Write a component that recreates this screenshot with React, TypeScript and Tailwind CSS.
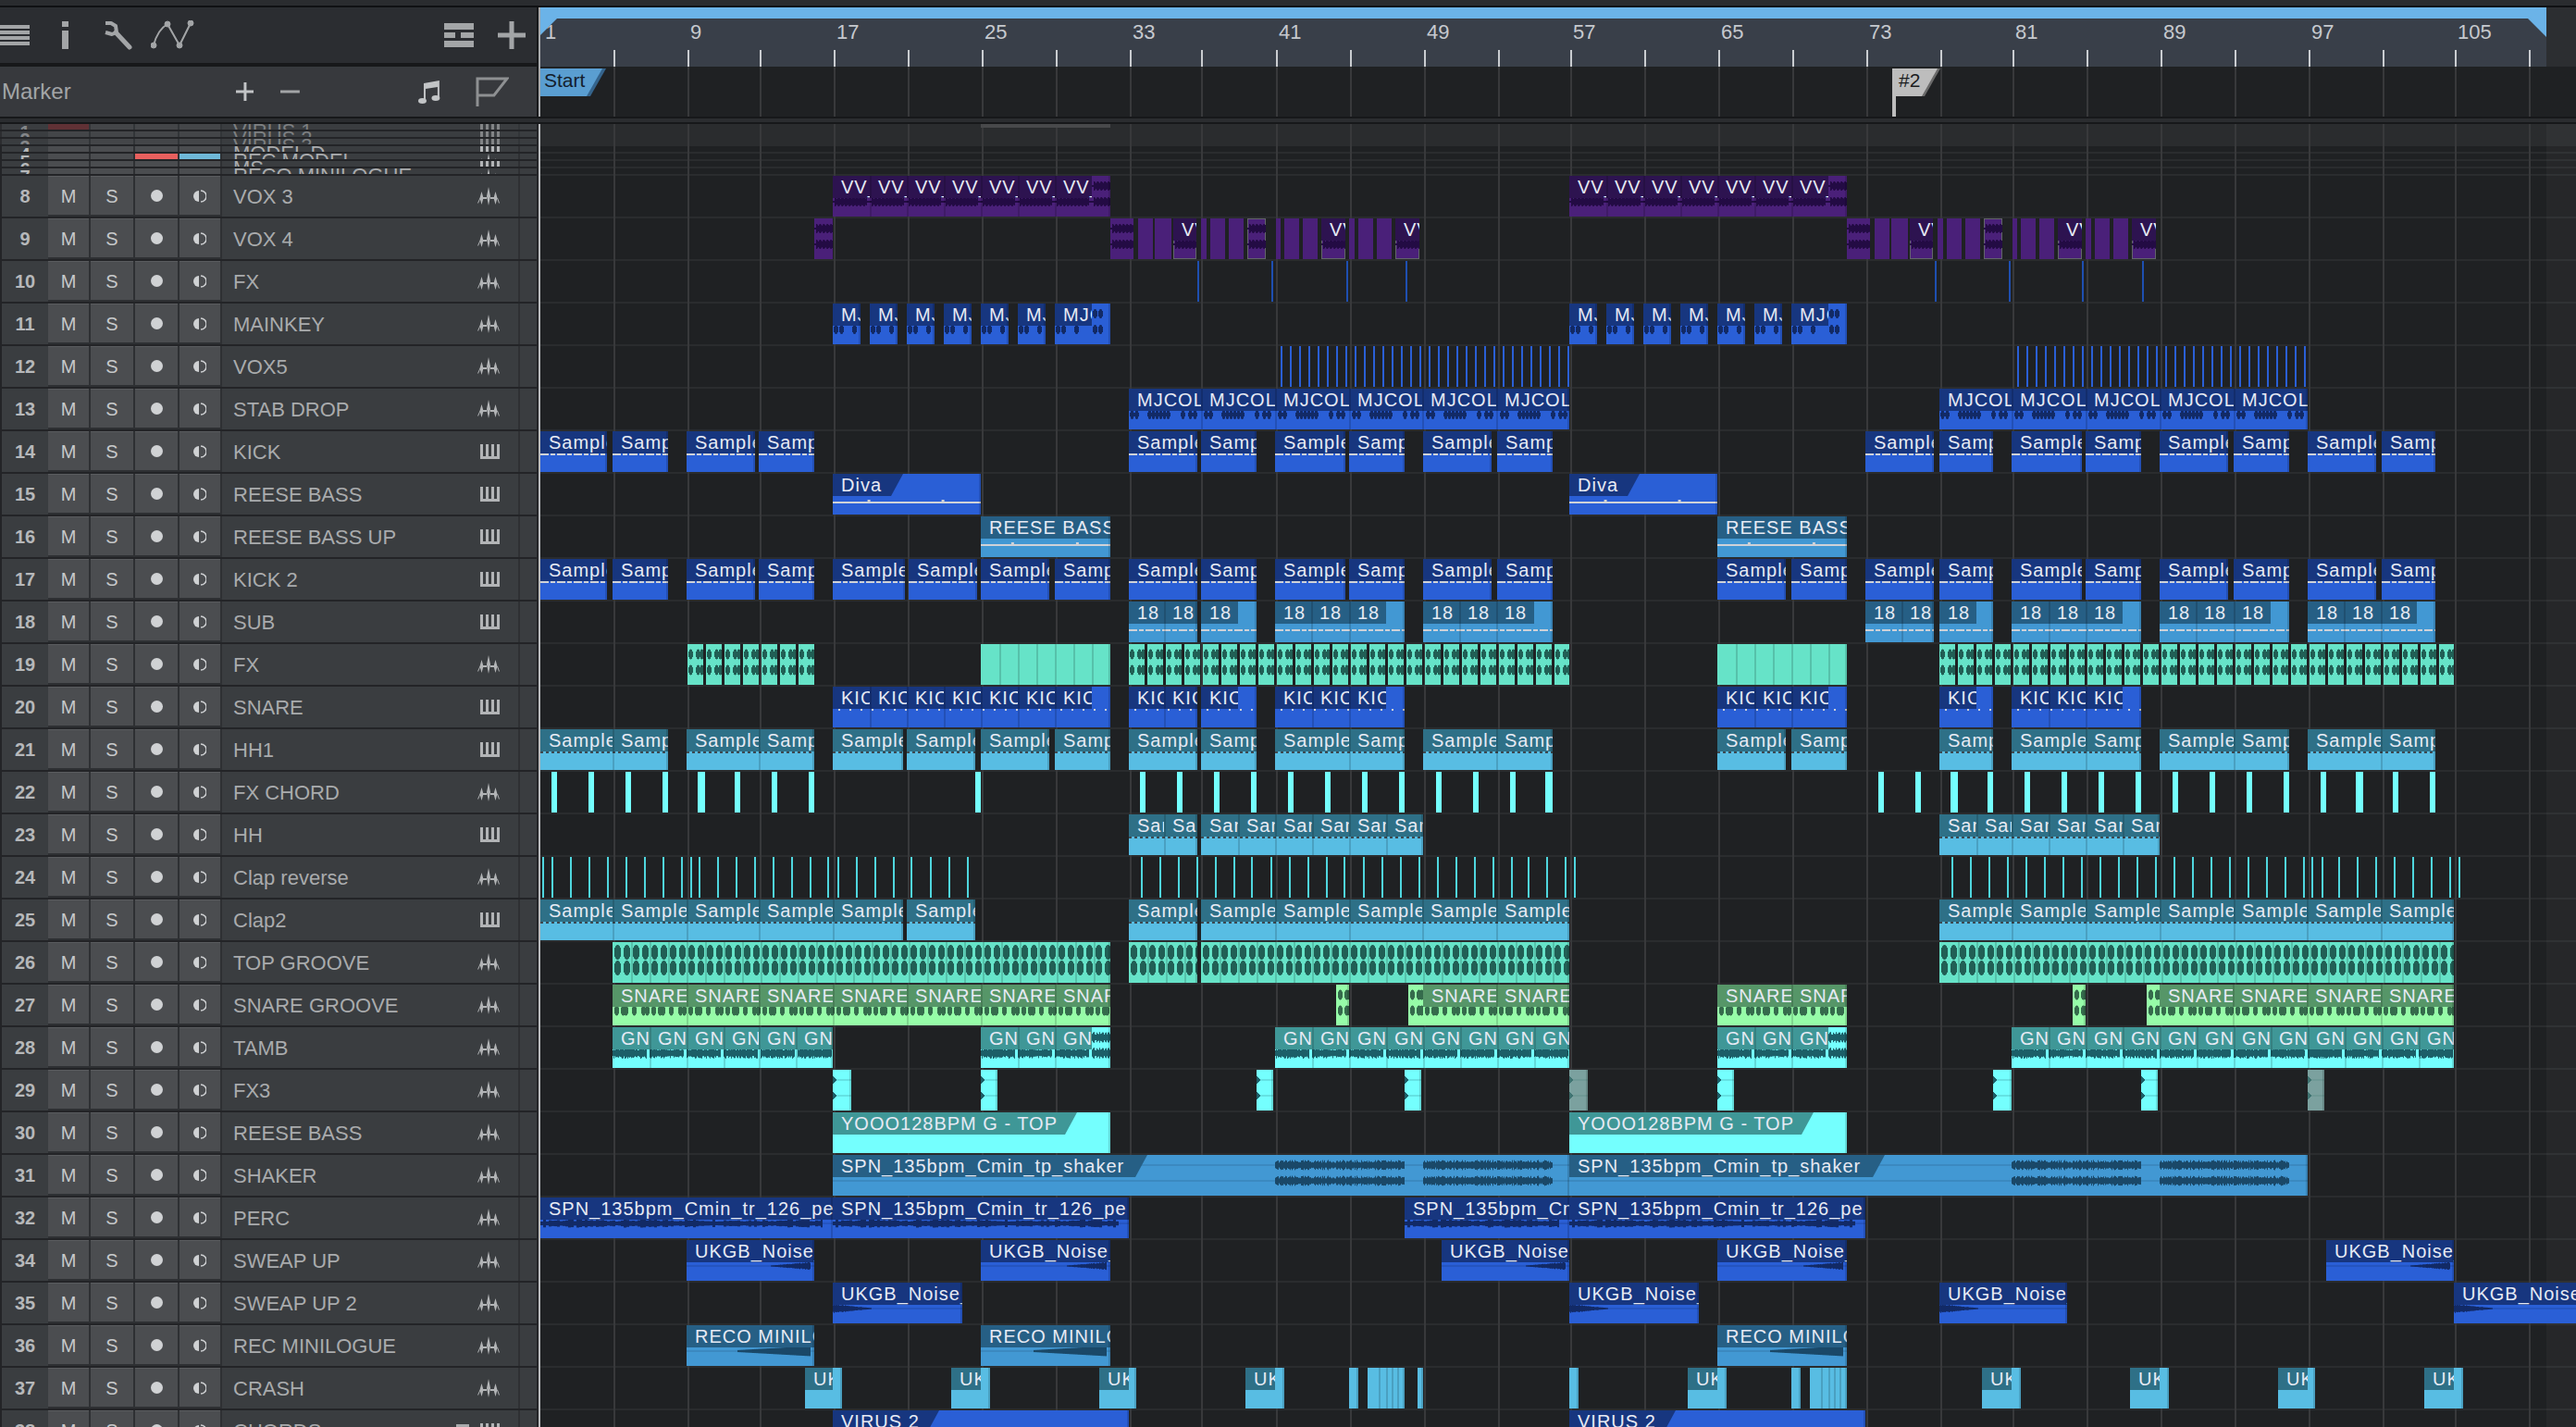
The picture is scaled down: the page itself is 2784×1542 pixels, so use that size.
import React from "react";

type Kind = "vox" | "mj" | "stab" | "fxt" | "blob" | "snare" | "gn" | "shk" | "perc" | "nEnd" | "nStart" | "rEnd" | "edge";
type Color = "purple" | "blue" | "mid" | "light" | "teal" | "cyan" | "green" | "gray" | "thin" | "hair" | "bar" | "clap";

type ClipT = {
  color: Color;
  x: number;
  end: number;
  label?: string;
  segs?: number[];
  headEnd?: number;
  slant?: boolean;
  wave?: Kind;
  dash?: "white" | "dark" | "dots" | "solid";
  dashY?: number;
  outlined?: boolean;
  noSeam?: boolean;
};

type Track = { n: number; name: string; piano?: boolean; clips: ClipT[]; extra?: boolean };

const palette: Record<Color, { body: string; head: string; wave: string }> = {
  purple: { body: "bg-[#4a2079]", head: "bg-[#2d1350]", wave: "#230b44" },
  blue: { body: "bg-[#2a5fd6]", head: "bg-[#17367f]", wave: "#122a66" },
  mid: { body: "bg-[#4298d3]", head: "bg-[#265f85]", wave: "#1a4868" },
  light: { body: "bg-[#58bde3]", head: "bg-[#2e7087]", wave: "#2c5a6c" },
  teal: { body: "bg-[#66e3c8]", head: "bg-[#3f8f80]", wave: "#215f55" },
  cyan: { body: "bg-[#74fffe]", head: "bg-[#3f9797]", wave: "#1c5f68" },
  green: { body: "bg-[#96fca8]", head: "bg-[#569668]", wave: "#356b4c" },
  gray: { body: "bg-[#7ba19f]", head: "bg-[#7ba19f]", wave: "#3f7371" },
  thin: { body: "bg-[#1e4fb0]", head: "bg-[#1e4fb0]", wave: "#000" },
  hair: { body: "bg-[#2a5fd6]", head: "bg-[#2a5fd6]", wave: "#000" },
  bar: { body: "bg-[#74fffe]", head: "bg-[#74fffe]", wave: "#000" },
  clap: { body: "bg-[#4fd6de]", head: "bg-[#4fd6de]", wave: "#000" },
};

const hash = (n: number) => {
  const s = Math.sin(n * 12.9898) * 43758.5453;
  return s - Math.floor(s);
};

const near = (p: number, at: number[], r: number) => {
  let best = 0;
  for (const a of at) {
    const d = Math.abs(p - a);
    if (d < r) best = Math.max(best, Math.sqrt(1 - (d / r) * (d / r)));
  }
  return best;
};

const amp = (kind: Kind, t: number, gx: number, w: number) => {
  switch (kind) {
    case "vox": {
      const p = t % 40;
      return p < 2 || p > 36 ? 1 : 3 + 2 * Math.abs(Math.sin(p * 0.8));
    }
    case "mj":
      return 5 * near(t % 40, [3, 9, 23], 2.5);
    case "stab":
      return 5 * near(t % 80, [3, 8, 22, 26, 30, 34, 38, 42, 58, 66, 71], 2.2);
    case "fxt":
      return 5.5 * near(t % 20, [3, 11, 15], 2.4);
    case "blob":
      return 8 * near(t % 20, [5, 15], 3.8);
    case "snare":
      return 5.5 * near(t % 40, [4, 11, 14, 23, 33, 37], 2.6);
    case "gn":
      return t % 40 > 36 ? 0 : 3 + 3 * hash(Math.floor(t));
    case "shk":
      return (gx >= 1378 && gx < 1518) || (gx >= 1538 && gx < 1678) || (gx >= 2174 && gx < 2314) || (gx >= 2334 && gx < 2474)
        ? 2.5 + 3 * hash(t)
        : 0;
    case "perc":
      return t > w - 12 ? 0 : 2 + 2.5 * hash(Math.floor(t / 3));
    case "nEnd":
      return t > w - 48 && t < w - 4 ? ((t - (w - 48)) / 44) * 4 * (0.7 + 0.3 * hash(t)) + 0.5 : 0;
    case "nStart":
      return t < 42 ? 4.5 * (1 - t / 42) * (0.7 + 0.3 * hash(t)) + 0.5 : 0;
    case "rEnd":
      return t > w - 84 && t < w - 4 ? 1 + ((t - (w - 84)) / 80) * 4.5 : 0;
    case "edge":
      return t < 4 ? 4 - t : 0;
  }
};

const WaveSvg = ({ c }: { c: ClipT }) => {
  const w = c.end - c.x;
  const pal = palette[c.color];
  let d = "";
  let ys: number[] = [];
  if (c.wave) {
    ys = ["perc", "nEnd", "nStart", "rEnd"].includes(c.wave) ? [28] : [11, 28];
    for (let t = 0; t < w; t++) {
      const a = amp(c.wave, t, c.x + t, w);
      if (a > 0.3) for (const y of ys) d += `M${t + 0.5} ${(y - a).toFixed(1)}V${(y + a).toFixed(1)}`;
    }
  }
  const faint = c.wave && ["shk", "nEnd", "nStart", "rEnd", "edge", "perc"].includes(c.wave);
  const y = c.dashY ?? 25;
  return (
    <svg className="absolute inset-0" width={w} height={44}>
      {faint && ys.map((cy) => <line key={cy} x1={0} x2={w} y1={cy} y2={cy} stroke={pal.wave} strokeOpacity={0.18} strokeWidth={2} />)}
      {d && <path d={d} stroke={pal.wave} strokeWidth={1} fill="none" />}
      {c.dash === "white" && <line x1={0} x2={w} y1={y} y2={y} stroke="#cfd2d8" strokeWidth={2} strokeDasharray="9 2 5 2" />}
      {c.dash === "dark" && <line x1={0} x2={w} y1={y} y2={y} stroke="#3c4a52" strokeWidth={2} strokeDasharray="3 3" />}
      {c.dash === "dots" && <line x1={6} x2={w} y1={y} y2={y} stroke="#cfd2d8" strokeWidth={2} strokeDasharray="2 10" />}
      {c.dash === "solid" && (
        <>
          <line x1={0} x2={w} y1={y} y2={y} stroke="#cfd2d8" strokeWidth={2} />
          <rect x={w * 0.235} y={y - 3} width={3} height={3} fill="#cfd2d8" />
          <rect x={w * 0.735} y={y - 3} width={3} height={3} fill="#cfd2d8" />
        </>
      )}
    </svg>
  );
};

const Clip = ({ c }: { c: ClipT }) => {
  const pal = palette[c.color];
  const w = c.end - c.x;
  const segs = c.segs ?? [c.x];
  const headEnd = c.headEnd ?? c.end;
  return (
    <div
      className={`absolute top-0 h-[44px] overflow-hidden ${pal.body} ${c.outlined ? "outline outline-1 -outline-offset-1 outline-[#62646a]" : ""}`}
      style={{ left: c.x - 584, width: w }}
    >
      <WaveSvg c={c} />
      {c.label && (
        <div
          className={`absolute left-0 top-0 flex h-[24px] overflow-hidden ${pal.head} ${
            c.slant ? "[clip-path:polygon(0_0,100%_0,calc(100%-13px)_100%,0_100%)]" : ""
          }`}
          style={{ width: headEnd - c.x }}
        >
          {segs.map((s, i) => (
            <div
              key={s}
              className="shrink-0 overflow-hidden whitespace-nowrap pl-[9px] text-[20px] leading-[24px] tracking-[1px] text-[#e6eaf4]"
              style={{ width: Math.min(segs[i + 1] ?? headEnd, headEnd) - s }}
            >
              {c.label}
            </div>
          ))}
        </div>
      )}
      {!c.noSeam &&
        segs.slice(1).map((s) => (
          <div key={s} className="absolute inset-y-0 w-[2px] bg-black/15" style={{ left: s - c.x }} />
        ))}
      {!c.noSeam && <div className="absolute inset-y-0 right-0 w-[2px] bg-black/15" />}
    </div>
  );
};

const step = (from: number, to: number, by: number) => {
  const out: number[] = [];
  for (let x = from; x < to - 1; x += by) out.push(Math.round(x));
  return out;
};

const both = (a: number, fn: (o: number) => ClipT[]) => fn(a).concat(fn(a + 796));

const kickL = [[584, 656], [662, 722], [742, 816], [820, 880]];
const kickA = [[900, 978], [982, 1056], [1060, 1134], [1140, 1200]];
const kickM = [[1220, 1294], [1298, 1358], [1378, 1454], [1458, 1518], [1538, 1612], [1618, 1678]];
const kickX = [[1856, 1930], [1936, 1996]];
const kickR = [[2016, 2090], [2096, 2154], [2174, 2250], [2254, 2314], [2334, 2408], [2414, 2474], [2494, 2568], [2574, 2632]];

const samples = (list: number[][]) =>
  list.map(([x, end]): ClipT => ({ color: "blue", x, end, label: "Sample", dash: "white" }));

const subs: [number, number, number[], number][] = [
  [1220, 1294, [1220, 1258], 1294],
  [1298, 1358, [1298], 1338],
  [1378, 1518, [1378, 1417, 1458], 1498],
  [1538, 1678, [1538, 1577, 1617], 1658],
  [2016, 2090, [2016, 2055], 2090],
  [2096, 2154, [2096], 2136],
  [2174, 2314, [2174, 2214, 2254], 2294],
  [2334, 2474, [2334, 2373, 2414], 2454],
  [2494, 2632, [2494, 2533, 2573], 2612],
];

const vox4: [number, number, boolean?, boolean?][] = [
  [1200, 1225, false, true], [1230, 1246], [1248, 1266], [1268, 1293, true],
  [1298, 1304], [1308, 1324], [1328, 1344], [1348, 1368, false, true],
  [1379, 1384], [1388, 1404], [1408, 1424], [1428, 1454, true],
  [1458, 1464], [1468, 1484], [1488, 1504], [1508, 1534, true],
];

const vox4Clips = (off: number) =>
  vox4.map(([x, end, lab, wav]): ClipT => ({
    color: "purple",
    x: x + off,
    end: end + off,
    label: lab ? "VV_" : undefined,
    wave: lab || wav ? "vox" : undefined,
    outlined: lab || (wav && x !== 1200),
    noSeam: true,
  }));

const lines = (xs: number[], color: Color, width: number): ClipT[] =>
  xs.map((x) => ({ color, x, end: x + width, noSeam: true }));

const teeth = (from: number, to: number): ClipT[] =>
  step(from, to, 20).map((x) => ({ color: "teal", x, end: Math.min(x + 17, to), wave: "fxt", noSeam: true }));

const chord = [596, 636, 676, 716, 794, 834, 874, 1054, 1232, 1272, 1312, 1352, 1392, 1432, 1472, 1512, 1552, 1592, 1632, 2030, 2070, 2148, 2188, 2228, 2268, 2308, 2348, 2388, 2428, 2468, 2508, 2586, 2626];
const chordWide = [754, 1670, 2108, 2546];
const clapRev = [586, 596, 616, 636, 656, 676, 696, 716, 736, 746, 755, 775, 795, 815, 835, 855, 875, 894, 905, 925, 945, 965, 984, 1005, 1025, 1045, 1233, 1253, 1273, 1293, 1313, 1333, 1352, 1373, 1393, 1413, 1433, 1452, 1473, 1493, 1513, 1533, 1553, 1573, 1593, 1613, 1633, 1651, 1671, 1691, 1701, 2109, 2129, 2149, 2169, 2189, 2209, 2229, 2249, 2269, 2289, 2309, 2329, 2349, 2369, 2389, 2409, 2429, 2449, 2469, 2489, 2498, 2509, 2527, 2547, 2567, 2587, 2607, 2627, 2647, 2657];

const noise = (label: string, color: Color, list: [number, number, Kind][]) =>
  list.map(([x, end, wave]): ClipT => ({ color, x, end, label, wave }));

const uk = (x: number, headEnd: number, end: number): ClipT => ({ color: "light", x, end, label: "UK", headEnd });
const sliver = (x: number, end: number, segs?: number[]): ClipT => ({ color: "light", x, end, segs });

const tracks: Track[] = [
  { n: 8, name: "VOX 3", clips: both(900, (o) => [{ color: "purple", x: o, end: o + 300, label: "VV_", segs: step(o, o + 280, 40), headEnd: o + 280, wave: "vox" }]) },
  {
    n: 9,
    name: "VOX 4",
    clips: [{ color: "purple", x: 880, end: 900, wave: "vox", noSeam: true } as ClipT, ...vox4Clips(0), ...vox4Clips(796)],
  },
  { n: 10, name: "FX", clips: lines([1294, 1374, 1455, 1519, 2091, 2171, 2250, 2315], "thin", 2) },
  {
    n: 11,
    name: "MAINKEY",
    clips: both(900, (o) => [
      ...[0, 40, 80, 120, 160, 200].map((d): ClipT => ({ color: "blue", x: o + d, end: o + d + 30, label: "MJCOL", wave: "mj" })),
      { color: "blue", x: o + 240, end: o + 300, label: "MJCOL", headEnd: o + 280, wave: "mj" },
    ]),
  },
  { n: 12, name: "VOX5", clips: lines([...step(1384, 1704, 10), ...step(2180, 2500, 10)], "hair", 2) },
  {
    n: 13,
    name: "STAB DROP",
    clips: [
      { color: "blue", x: 1220, end: 1696, label: "MJCOL", segs: [1220, 1298, 1378, 1458, 1537, 1617], wave: "stab" },
      { color: "blue", x: 2096, end: 2494, label: "MJCOL", segs: [2096, 2174, 2254, 2334, 2414], wave: "stab" },
    ],
  },
  { n: 14, name: "KICK", piano: true, clips: samples([...kickL, ...kickM, ...kickR]) },
  { n: 15, name: "REESE BASS", piano: true, clips: both(900, (o) => [{ color: "blue", x: o, end: o + 160, label: "Diva", headEnd: o + 76, slant: true, dash: "solid", dashY: 31 }]) },
  { n: 16, name: "REESE BASS UP", piano: true, clips: both(1060, (o) => [{ color: "mid", x: o, end: o + 140, label: "REESE BASS", dash: "solid", dashY: 31 }]) },
  { n: 17, name: "KICK 2", piano: true, clips: samples([...kickL, ...kickA, ...kickM, ...kickX, ...kickR]) },
  {
    n: 18,
    name: "SUB",
    piano: true,
    clips: subs.map(([x, end, segs, headEnd]): ClipT => ({ color: "mid", x, end, label: "18", segs, headEnd, dash: "white", dashY: 31 })),
  },
  {
    n: 19,
    name: "FX",
    clips: [
      ...teeth(743, 880),
      { color: "teal", x: 1060, end: 1200, segs: step(1060, 1200, 20) } as ClipT,
      ...teeth(1220, 1696),
      { color: "teal", x: 1856, end: 1996, segs: step(1856, 1996, 20) } as ClipT,
      ...teeth(2096, 2652),
    ],
  },
  {
    n: 20,
    name: "SNARE",
    piano: true,
    clips: (
      [
        [900, 1200, step(900, 1180, 40), 1180],
        [1220, 1294, [1220, 1258], 1294],
        [1298, 1358, [1298], 1338],
        [1378, 1518, [1378, 1418, 1458], 1498],
        [1856, 1996, [1856, 1896, 1936], 1976],
        [2096, 2154, [2096], 2136],
        [2174, 2314, [2174, 2214, 2254], 2294],
      ] as [number, number, number[], number][]
    ).map(([x, end, segs, headEnd]): ClipT => ({ color: "blue", x, end, label: "KICK", segs, headEnd, dash: "dots", dashY: 25 })),
  },
  {
    n: 21,
    name: "HH1",
    piano: true,
    clips: (
      [
        [584, 722, [584, 662]], [742, 880, [742, 820]], [900, 976], [980, 1054], [1060, 1134], [1140, 1200],
        [1220, 1294], [1298, 1358], [1378, 1518, [1378, 1458]], [1538, 1678, [1538, 1617]],
        [1856, 1930], [1936, 1996], [2096, 2154], [2174, 2314, [2174, 2254]], [2334, 2474, [2334, 2414]], [2494, 2632, [2494, 2573]],
      ] as [number, number, number[]?][]
    ).map(([x, end, segs]): ClipT => ({ color: "light", x, end, label: "Sample", segs, dash: "dark" })),
  },
  { n: 22, name: "FX CHORD", clips: [...lines(chord, "bar", 6), ...lines(chordWide, "bar", 8)] },
  {
    n: 23,
    name: "HH",
    piano: true,
    clips: [
      { color: "light", x: 1220, end: 1294, label: "Sample", segs: [1220, 1258], dash: "dark" },
      { color: "light", x: 1298, end: 1538, label: "Sample", segs: step(1298, 1538, 40), dash: "dark" },
      { color: "light", x: 2096, end: 2334, label: "Sample", segs: [2096, 2136, 2174, 2214, 2254, 2294], dash: "dark" },
    ],
  },
  { n: 24, name: "Clap reverse", clips: lines(clapRev, "clap", 2) },
  {
    n: 25,
    name: "Clap2",
    piano: true,
    clips: [
      { color: "light", x: 584, end: 976, label: "Sample", segs: [584, 662, 742, 820, 900], dash: "dark" },
      { color: "light", x: 980, end: 1054, label: "Sample", dash: "dark" },
      { color: "light", x: 1220, end: 1294, label: "Sample", dash: "dark" },
      { color: "light", x: 1298, end: 1696, label: "Sample", segs: [1298, 1378, 1458, 1537, 1617], dash: "dark" },
      { color: "light", x: 2096, end: 2652, label: "Sample", segs: [2096, 2174, 2254, 2334, 2414, 2493, 2573], dash: "dark" },
    ],
  },
  {
    n: 26,
    name: "TOP GROOVE",
    clips: [
      { color: "teal", x: 662, end: 1200, segs: step(662, 1200, 20), wave: "blob" },
      { color: "teal", x: 1220, end: 1294, segs: step(1220, 1294, 20), wave: "blob" },
      { color: "teal", x: 1298, end: 1696, segs: step(1298, 1696, 20), wave: "blob" },
      { color: "teal", x: 2096, end: 2652, segs: step(2096, 2652, 20), wave: "blob" },
    ],
  },
  {
    n: 27,
    name: "SNARE GROOVE",
    clips: [
      { color: "green", x: 662, end: 1200, label: "SNARE", segs: [662, 742, 820, 900, 980, 1060, 1140], wave: "snare" },
      { color: "green", x: 1444, end: 1458, wave: "snare" },
      { color: "green", x: 1522, end: 1538, wave: "snare", noSeam: true },
      { color: "green", x: 1538, end: 1696, label: "SNARE", segs: [1538, 1617], wave: "snare" },
      { color: "green", x: 1856, end: 1996, label: "SNARE", segs: [1856, 1936], wave: "snare" },
      { color: "green", x: 2240, end: 2254, wave: "snare" },
      { color: "green", x: 2320, end: 2334, wave: "snare", noSeam: true },
      { color: "green", x: 2334, end: 2652, label: "SNARE", segs: [2334, 2413, 2493, 2573], wave: "snare" },
    ],
  },
  {
    n: 28,
    name: "TAMB",
    clips: [
      { color: "cyan", x: 662, end: 900, label: "GN", segs: [662, 702, 742, 782, 820, 860], wave: "gn" },
      { color: "cyan", x: 1060, end: 1200, label: "GN", segs: [1060, 1100, 1140], headEnd: 1180, wave: "gn" },
      { color: "cyan", x: 1378, end: 1696, label: "GN", segs: step(1378, 1696, 40), wave: "gn" },
      { color: "cyan", x: 1856, end: 1996, label: "GN", segs: [1856, 1896, 1936], headEnd: 1976, wave: "gn" },
      { color: "cyan", x: 2174, end: 2652, label: "GN", segs: step(2174, 2652, 40), wave: "gn" },
    ],
  },
  {
    n: 29,
    name: "FX3",
    clips: [
      ...[[900, 920], [1060, 1078], [1358, 1376], [1518, 1536], [1856, 1874], [2154, 2174], [2314, 2332]].map(([x, end]): ClipT => ({ color: "cyan", x, end, wave: "edge" })),
      { color: "gray", x: 1696, end: 1716, wave: "edge" },
      { color: "gray", x: 2494, end: 2512, wave: "edge" },
    ],
  },
  { n: 30, name: "REESE BASS", clips: both(900, (o) => [{ color: "cyan", x: o, end: o + 300, label: "YOOO128BPM G - TOP", headEnd: o + 264, slant: true }]) },
  {
    n: 31,
    name: "SHAKER",
    clips: [
      { color: "mid", x: 900, end: 1696, label: "SPN_135bpm_Cmin_tp_shaker", headEnd: 1240, slant: true, wave: "shk" },
      { color: "mid", x: 1696, end: 2494, label: "SPN_135bpm_Cmin_tp_shaker", headEnd: 2037, slant: true, wave: "shk" },
    ],
  },
  {
    n: 32,
    name: "PERC",
    clips: [
      { color: "blue", x: 584, end: 900, label: "SPN_135bpm_Cmin_tr_126_pe", wave: "perc" },
      { color: "blue", x: 900, end: 1220, label: "SPN_135bpm_Cmin_tr_126_pe", wave: "perc" },
      { color: "blue", x: 1518, end: 1696, label: "SPN_135bpm_Cmin_tr_126_pe", wave: "perc" },
      { color: "blue", x: 1696, end: 2016, label: "SPN_135bpm_Cmin_tr_126_pe", wave: "perc" },
    ],
  },
  { n: 34, name: "SWEAP UP", clips: noise("UKGB_Noise_", "blue", [[742, 880, "nEnd"], [1060, 1200, "nEnd"], [1558, 1696, "nEnd"], [1856, 1996, "nEnd"], [2514, 2652, "nEnd"]]) },
  { n: 35, name: "SWEAP UP 2", clips: noise("UKGB_Noise_", "blue", [[900, 1040, "nStart"], [1696, 1836, "nStart"], [2096, 2234, "nStart"], [2652, 2792, "nStart"]]) },
  { n: 36, name: "REC MINILOGUE", clips: noise("RECO MINILOGUE", "mid", [[742, 880, "rEnd"], [1060, 1200, "rEnd"], [1856, 1996, "rEnd"]]) },
  {
    n: 37,
    name: "CRASH",
    clips: [
      uk(870, 900, 910), uk(1028, 1060, 1070), uk(1188, 1220, 1228), uk(1346, 1378, 1388),
      sliver(1458, 1468), sliver(1478, 1518, [1478, 1490, 1498, 1504, 1510]), sliver(1532, 1538), sliver(1696, 1706),
      uk(1824, 1856, 1866), sliver(1936, 1946), sliver(1956, 1996, [1956, 1968, 1976, 1982, 1988]),
      uk(2142, 2174, 2184), uk(2302, 2334, 2344), uk(2462, 2494, 2502), uk(2620, 2652, 2662),
    ],
  },
  {
    n: 38,
    name: "CHORDS",
    piano: true,
    extra: true,
    clips: both(900, (o) => [{ color: "blue", x: o, end: o + 320, label: "VIRUS 2", headEnd: o + 115, slant: true }]),
  },
];

const compact = [
  { n: 1, name: "VIRUS 1", faded: true, piano: true, mute: true },
  { n: 2, name: "VIRUS 2", faded: true, piano: true },
  { n: 3, name: "VIRUS 3", faded: true, piano: true },
  { n: 4, name: "MODEL D", piano: true },
  { n: 5, name: "REC MODEL", armed: true },
  { n: 6, name: "MS", piano: true },
  { n: 7, name: "RECO MINILOGUE" },
];

const ticks = [663, 743, 821, 901, 981, 1061, 1141, 1221, 1298, 1379, 1459, 1539, 1619, 1697, 1777, 1857, 1937, 2017, 2097, 2175, 2255, 2335, 2415, 2495, 2575, 2653, 2733];
const rulerLabels = [[743, "9"], [901, "17"], [1061, "25"], [1221, "33"], [1379, "41"], [1539, "49"], [1697, "57"], [1857, "65"], [2017, "73"], [2175, "81"], [2335, "89"], [2495, "97"], [2653, "105"]] as [number, string][];

const WaveIcon = () => (
  <svg className="shrink-0" width="24" height="20" viewBox="0 0 24 20" fill="#b2b4b6">
    <path d="M4.500 5 6.500 12 4.500 19 2.500 12ZM12 0 14 10 12 20 10 10ZM19.500 5 21.500 12 19.500 19 17.500 12Z" />
    <path d="M0 17.500 2.500 12h1L1 17.500zM6 11h4v2H6zM14 11h4v2h-4zM21 12h1l2 5.500h-1z" />
  </svg>
);

const PianoIcon = () => (
  <svg className="shrink-0" width="21" height="16" viewBox="0 0 21 16" fill="#b2b4b6">
    <path d="M0 0h3v16H0zM6 0h3v16H6zM12 0h3v16h-3zM18 0h3v16h-3zM0 13h21v3H0z" />
  </svg>
);

const MonitorIcon = () => (
  <svg width="14" height="14" viewBox="0 0 14 14">
    <path d="M6 1A6 6 0 0 0 6 13Z" fill="#cfd1d3" />
    <path d="M8 1A6 6 0 0 1 8 13" fill="none" stroke="#cfd1d3" strokeWidth="1.5" />
  </svg>
);

const Btn = ({ w, children }: { w: string; children?: React.ReactNode }) => (
  <div className={`flex items-center justify-center border-t border-[#5a5c5f] bg-[#4b4d50] text-[20px] text-[#c6c8ca] ${w}`}>{children}</div>
);

const TrackRow = ({ t }: { t: Track }) => (
  <div className="flex h-[46px] shrink-0 border-b-2 border-[#232427] bg-[#3a3d40]">
    <div className="w-[2px] bg-[#232427]" />
    <div className="flex w-[50px] items-center justify-center text-[20px] font-bold text-[#b6b8ba]">{t.n}</div>
    <div className="flex w-[186px] gap-[2px] bg-[#2e3033] pb-[2px]">
      <Btn w="w-[44px]">M</Btn>
      <Btn w="w-[46px]">S</Btn>
      <Btn w="w-[46px]">
        <div className="h-[13px] w-[13px] rounded-full bg-[#d0d2d4]" />
      </Btn>
      <Btn w="w-[44px]">
        <MonitorIcon />
      </Btn>
    </div>
    <div className="w-[2px] bg-[#2e3033]" />
    <div className="flex w-[320px] items-center justify-between pl-[12px] pr-[20px] text-[22px] text-[#a9abad]">
      <span>{t.name}</span>
      <div className="flex items-center gap-[12px]">
        {t.extra && <div className="h-[14px] w-[14px] bg-[#a9abad]" />}
        {t.piano ? <PianoIcon /> : <WaveIcon />}
      </div>
    </div>
    <div className="w-[2px] bg-[#2e3033]" />
    <div className="w-[18px]" />
  </div>
);

const CompactRow = ({ r }: { r: (typeof compact)[number] }) => (
  <div className="flex h-[8px] shrink-0 border-b-2 border-[#232427] bg-[#3a3d40]">
    <div className={`flex h-[6px] w-full overflow-hidden ${r.faded ? "opacity-60" : ""}`}>
      <div className="w-[2px] bg-[#232427]" />
      <div className="h-[6px] w-[50px] overflow-hidden text-center text-[20px] font-bold leading-[18px] text-[#b6b8ba]">{r.n}</div>
      <div className="flex w-[186px] gap-[2px] bg-[#2e3033]">
        <div className={`w-[44px] ${r.mute ? "bg-[#7a2a2e]" : "bg-[#4b4d50]"}`} />
        <div className="w-[46px] bg-[#4b4d50]" />
        <div className={`w-[46px] ${r.armed ? "bg-[#e8605e]" : "bg-[#4b4d50]"}`} />
        <div className={`w-[44px] ${r.armed ? "bg-[#6fb8d8]" : "bg-[#4b4d50]"}`} />
      </div>
      <div className="w-[2px] bg-[#2e3033]" />
      <div className="flex h-[6px] w-[320px] justify-between overflow-hidden pl-[12px] pr-[20px] text-[22px] leading-[22px] text-[#a9abad]">
        <span className="-mt-[3px] block h-[9px] overflow-hidden">{r.name}</span>
        {r.piano ? <PianoIcon /> : <WaveIcon />}
      </div>
      <div className="w-[2px] bg-[#2e3033]" />
    </div>
  </div>
);

const Grid = () => (
  <>
    {ticks.map((x) => (
      <div key={x} className="absolute inset-y-0 w-[2px] bg-[#38393b]" style={{ left: x - 584 }} />
    ))}
  </>
);

const Toolbar = () => (
  <div className="flex h-[60px] items-center justify-between bg-[#2b2d31] pr-[12px]">
    <div className="flex items-center">
      <svg width="32" height="24" viewBox="0 0 32 24" fill="#a3a5a7">
        <path d="M0 1h32v4H0zM0 7h32v4H0zM0 13h32v4H0zM0 19h32v4H0z" />
      </svg>
      <svg className="ml-[35px]" width="8" height="30" viewBox="0 0 8 30" fill="#a3a5a7">
        <path d="M0 0h7v6H0zM0 10h7v20H0z" />
      </svg>
      <svg className="ml-[36px]" width="32" height="32" viewBox="0 0 32 32" fill="none" stroke="#a3a5a7">
        <path d="M14 13 29 29" strokeWidth="5" strokeLinecap="round" />
        <path d="M3 3h6l5 3 1 7-5 2-7-2" strokeWidth="4" strokeLinejoin="round" />
      </svg>
      <svg className="ml-[20px]" width="48" height="32" viewBox="0 0 48 32" fill="#a3a5a7" stroke="#a3a5a7">
        <path d="M3 27C6 15 11 8 18 4M18 4l13 23M31 27l12-24" fill="none" strokeWidth="2" />
        <circle cx="3" cy="27" r="3" />
        <circle cx="18" cy="4" r="3" />
        <circle cx="31" cy="27" r="3" />
        <circle cx="43" cy="3" r="3" />
      </svg>
    </div>
    <div className="flex items-center gap-[26px]">
      <svg width="32" height="26" viewBox="0 0 32 26" fill="#a3a5a7">
        <path d="M0 0h32v7H0zM0 10h12v6H0zM18 10h14v6H18zM0 19h32v7H0z" />
      </svg>
      <svg width="30" height="30" viewBox="0 0 30 30" fill="#a3a5a7">
        <path d="M12.500 0h5v12.500H30v5H17.500V30h-5V17.500H0v-5h12.500z" />
      </svg>
    </div>
  </div>
);

const MarkerHeader = () => (
  <div className="flex h-[54px] items-center bg-[#37393d] pl-[2px] pr-[30px] text-[24px] text-[#a3a5a7]">
    <span className="w-[254px]">Marker</span>
    <svg width="20" height="20" viewBox="0 0 20 20" fill="#c2c4c6">
      <path d="M8.500 0h3v8.500H20v3h-8.500V20h-3v-8.500H0v-3h8.500z" />
    </svg>
    <svg className="ml-[29px]" width="21" height="20" viewBox="0 0 21 20" fill="#a3a5a7">
      <path d="M0 8.500h21v3H0z" />
    </svg>
    <svg className="ml-[128px]" width="24" height="26" viewBox="0 0 24 26" fill="#c2c4c6">
      <path d="M6 4 23 1v18h-2V8L8 10v13H6z" />
      <ellipse cx="4.500" cy="23" rx="4.500" ry="3" />
      <ellipse cx="19" cy="20" rx="4.500" ry="3" />
    </svg>
    <svg className="ml-[38px]" width="36" height="32" viewBox="0 0 36 32" fill="none" stroke="#8e9092" strokeWidth="3">
      <path d="M2 32V2h32L20 20H2" />
    </svg>
  </div>
);

const Ruler = () => (
  <div className="relative h-[64px] bg-[#2c2e31]">
    <div className="absolute inset-y-0 left-0 w-[2168px] bg-[#6bb3e8]">
      <div className="absolute inset-x-0 bottom-0 top-[12px] bg-[#393f49] [clip-path:polygon(18px_0,calc(100%-20px)_0,100%_20px,100%_100%,0_100%,0_18px)]">
        <span className="absolute left-[5px] top-[2px] text-[22px] leading-[26px] text-[#c6c9ce]">1</span>
        {rulerLabels.map(([x, s]) => (
          <span key={s} className="absolute top-[2px] text-[22px] leading-[26px] text-[#c6c9ce]" style={{ left: x - 584 + 3 }}>
            {s}
          </span>
        ))}
      </div>
      {ticks.map((x) => (
        <div key={x} className="absolute bottom-0 h-[18px] w-[2px] bg-[#c9ccd0]" style={{ left: x - 584 }} />
      ))}
    </div>
  </div>
);

const MarkerLane = () => (
  <div className="relative h-[54px] bg-[#1f2123]">
    <Grid />
    <div className="absolute left-0 top-[2px] flex h-[30px] w-[71px] bg-[#35648c] [clip-path:polygon(0_0,100%_0,calc(100%-17px)_100%,0_100%)]">
      <div className="w-[67px] bg-[#5a9ed1] pl-[4px] text-[21px] leading-[26px] text-[#14202c] [clip-path:polygon(0_0,100%_0,calc(100%-17px)_100%,0_100%)]">Start</div>
    </div>
    <div className="absolute left-[1461px] top-[2px] h-[52px] w-[4px] bg-[#bdbdbd]" />
    <div className="absolute left-[1461px] top-[2px] h-[30px] w-[52px] bg-[#6a6a6a] [clip-path:polygon(0_0,100%_0,calc(100%-17px)_100%,0_100%)]">
      <div className="h-full w-[49px] bg-[#bdbdbd] pl-[7px] text-[21px] leading-[26px] text-[#1c1d1f] [clip-path:polygon(0_0,100%_0,calc(100%-17px)_100%,0_100%)]">#2</div>
    </div>
  </div>
);

const App = () => {
  return (
    <div className="flex h-[1542px] w-[2784px] flex-col overflow-hidden bg-[#1f2123] font-['Liberation_Sans',Arial,sans-serif]">
      <div className="h-[6px] shrink-0 bg-[#2a2c2f]" />
      <div className="h-[2px] shrink-0 bg-[#101113]" />
      <div className="flex h-[118px] shrink-0">
        <div className="w-[582px] shrink-0 bg-[#17181a]">
          <div className="w-[580px]">
            <Toolbar />
            <div className="h-[4px] bg-[#17181a]" />
            <MarkerHeader />
          </div>
        </div>
        <div className="min-w-0 flex-1 border-l-2 border-[#a8aaac]">
          <Ruler />
          <MarkerLane />
        </div>
      </div>
      <div className="h-[2px] shrink-0 bg-[#17181a]" />
      <div className="h-[4px] shrink-0 bg-[#2b2d30]" />
      <div className="h-[2px] shrink-0 bg-[#17181a]" />
      <div className="flex min-h-0 flex-1">
        <div className="flex w-[582px] shrink-0 flex-col bg-[#232427] pr-[2px]">
          {compact.map((r) => (
            <CompactRow key={r.n} r={r} />
          ))}
          {tracks.map((t) => (
            <TrackRow key={t.n} t={t} />
          ))}
        </div>
        <div className="relative min-w-0 flex-1 overflow-hidden border-l-2 border-[#b8babc]">
          {compact.map((r) => (
            <div key={r.n} className={`h-[8px] border-b-2 border-[#2a2c2e] ${r.faded ? "bg-[#2a2c2e]" : ""}`} />
          ))}
          {tracks.map((t) => (
            <div key={t.n} className="h-[46px] border-b-2 border-[#2a2c2e]" />
          ))}
          <Grid />
          <div className="absolute left-[476px] top-0 h-[4px] w-[140px] bg-[#48494b]" />
          <div className="absolute inset-y-0 left-[2168px] right-0 bg-white/[0.03]" />
          <div className="absolute inset-x-0 top-[56px]">
            {tracks.map((t) => (
              <div key={t.n} className="relative h-[46px]">
                {t.clips.map((c) => (
                  <Clip key={`${c.x}-${c.end}`} c={c} />
                ))}
              </div>
            ))}
          </div>
        </div>
      </div>
    </div>
  );
};

export default App;
